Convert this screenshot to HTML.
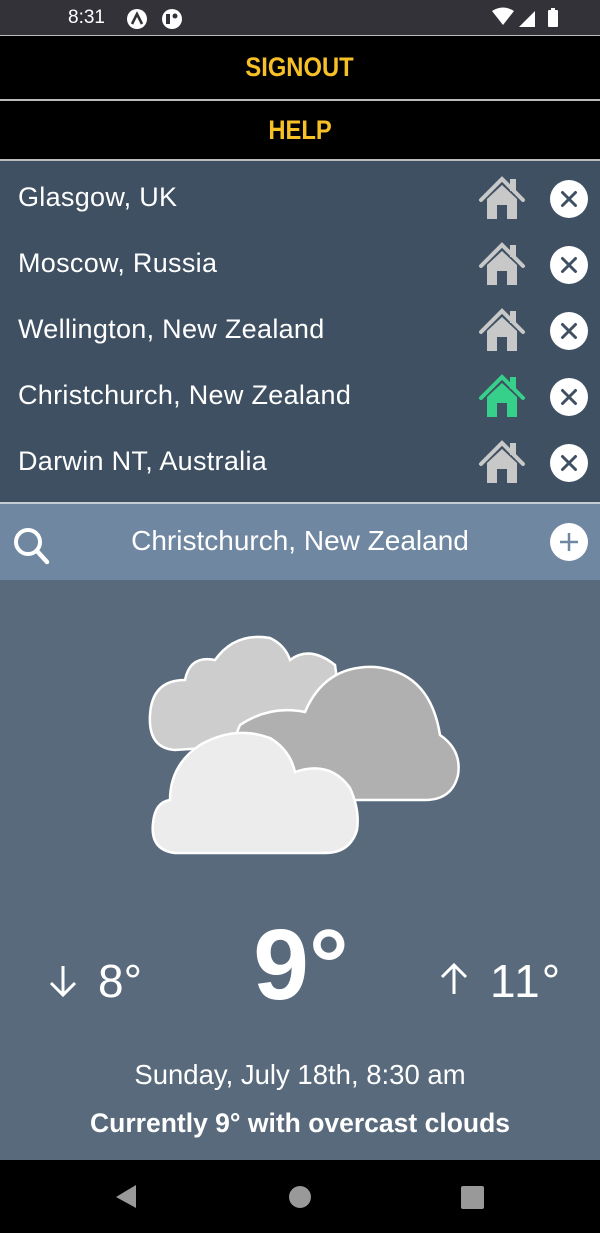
<!DOCTYPE html>
<html><head><meta charset="utf-8"><style>
*{margin:0;padding:0;box-sizing:border-box}
body{width:600px;height:1233px;overflow:hidden;font-family:"Liberation Sans",sans-serif;background:#596a7c;position:relative}
.abs{position:absolute;left:0;width:600px}
.status{top:0;height:35px;background:#333238;color:#fff}
.btn{background:#000;color:#f6c026;font-weight:bold;font-size:27px;text-align:center}
.btn span{display:inline-block;transform:scaleX(0.88)}
.row{position:absolute;left:18px;color:#fff;font-size:27px;letter-spacing:0.3px}
</style></head><body>
<div class="abs status">
<div style="position:absolute;left:68px;top:7px;font-size:19px">8:31</div>
<svg style="position:absolute;left:0;top:0" width="600" height="35">
<circle cx="137" cy="19" r="10" fill="#fff"/><path d="M132 24 L137 14 L142 24" stroke="#333238" stroke-width="2.6" fill="none"/>
<circle cx="172" cy="19" r="10" fill="#fff"/><rect x="166" y="14" width="4" height="10" fill="#333238"/><circle cx="175" cy="16" r="2.5" fill="#333238"/>
<path d="M492 11 Q503 4 514 11 L503 25 Z" fill="#fff"/>
<path d="M519 27 L535 11 L535 27 Z" fill="#fff"/>
<rect x="548" y="10" width="10" height="17" rx="1" fill="#fff"/><rect x="551" y="8" width="4" height="3" fill="#fff"/>
</svg>
</div>
<div class="abs" style="top:35px;height:1px;background:#bbb"></div>
<div class="abs btn" style="top:36px;height:63px;line-height:63px"><span>SIGNOUT</span></div>
<div class="abs" style="top:99px;height:2px;background:#bbb"></div>
<div class="abs btn" style="top:101px;height:58px;line-height:58px"><span>HELP</span></div>
<div class="abs" style="top:159px;height:2px;background:#bbb"></div>
<div class="abs" style="top:161px;height:341px;background:#3f5062"></div>
<div class="row" style="top:182px">Glasgow, UK</div>
<div class="row" style="top:248px">Moscow, Russia</div>
<div class="row" style="top:314px">Wellington, New Zealand</div>
<div class="row" style="top:380px">Christchurch, New Zealand</div>
<div class="row" style="top:446px">Darwin NT, Australia</div>
<svg class="abs" style="top:0;left:0" width="600" height="1233">
<defs>
<g id="h"><path d="M-21 1 L0 -20 L21 1" stroke="currentColor" stroke-width="4" fill="none" stroke-linecap="round"/><path d="M-15 0 L0 -14 L15 0 L15 20 L5 20 L5 6 L-5 6 L-5 20 L-15 20 Z" fill="currentColor"/><rect x="8" y="-20" width="6" height="12" fill="currentColor"/></g>
<g id="x"><circle r="19" fill="#fff"/><path d="M-6.5 -6.5 L6.5 6.5 M6.5 -6.5 L-6.5 6.5" stroke="#3f5062" stroke-width="3" stroke-linecap="round"/></g>
</defs>
<use href="#h" x="502" y="199" color="#c8c8c8"/><use href="#x" x="569" y="199"/>
<use href="#h" x="502" y="265" color="#c8c8c8"/><use href="#x" x="569" y="265"/>
<use href="#h" x="502" y="331" color="#c8c8c8"/><use href="#x" x="569" y="331"/>
<use href="#h" x="502" y="397" color="#36d08a"/><use href="#x" x="569" y="397"/>
<use href="#h" x="502" y="463" color="#c8c8c8"/><use href="#x" x="569" y="463"/>
</svg>
<div class="abs" style="top:502px;height:2px;background:#c5ccd4"></div>
<div class="abs" style="top:504px;height:76px;background:#6f87a0"></div>
<svg class="abs" style="top:504px" width="600" height="76">
<circle cx="28" cy="38" r="12" stroke="#fff" stroke-width="4" fill="none"/><path d="M37 47 L47 58" stroke="#fff" stroke-width="4.5" stroke-linecap="round"/>
<circle cx="569" cy="38" r="19" fill="#fff"/><path d="M569 29 V47 M560 38 H578" stroke="#6f87a0" stroke-width="2.5"/>
</svg>
<div class="abs" style="top:525px;text-align:center;color:#fff;font-size:28px">Christchurch, New Zealand</div>
<svg class="abs" style="top:0" width="600" height="1233">
<g stroke="#fff" stroke-width="2.5">
<path d="M175 750 Q148 748 150 715 Q152 680 185 680 Q190 655 215 660 Q235 632 270 638 Q285 645 290 660 Q310 645 335 665 L340 700 L250 745 Z" fill="#cdcdcd"/>
<path d="M245 800 Q220 770 240 725 Q270 705 305 712 Q325 665 375 667 Q430 672 440 735 Q462 750 458 775 Q452 800 425 800 Z" fill="#b0b0b0"/>
<path d="M175 853 Q150 850 153 823 Q155 802 170 800 Q170 765 200 745 Q235 725 270 738 Q290 750 295 772 Q330 760 350 788 Q360 810 357 830 Q350 853 325 853 Z" fill="#ececec"/>
</g>
<path d="M63 966 V994 M51 983 L63 995 L75 983" stroke="#fff" stroke-width="3" fill="none"/>
<path d="M454 994 V966 M442 977 L454 965 L466 977" stroke="#fff" stroke-width="3" fill="none"/>
</svg>
<div style="position:absolute;left:98px;top:954px;color:#fff;font-size:46px">8°</div>
<div style="position:absolute;left:490px;top:954px;color:#fff;font-size:46px;letter-spacing:2px">11°</div>
<div class="abs" style="top:908px;text-align:center;color:#fff;font-size:100px;font-weight:bold;padding-left:2px">9°</div>
<div class="abs" style="top:1059px;text-align:center;color:#fff;font-size:27.5px">Sunday, July 18th, 8:30 am</div>
<div class="abs" style="top:1108px;text-align:center;color:#fff;font-size:26.5px;font-weight:bold">Currently 9° with overcast clouds</div>
<div class="abs" style="top:1160px;height:73px;background:#000"></div>
<svg class="abs" style="top:1160px" width="600" height="73">
<path d="M136 25 L136 48 L116 37 Z" fill="#999"/>
<circle cx="300" cy="37" r="11" fill="#999"/>
<rect x="461" y="26" width="23" height="23" rx="2" fill="#999"/>
</svg>
</body></html>
